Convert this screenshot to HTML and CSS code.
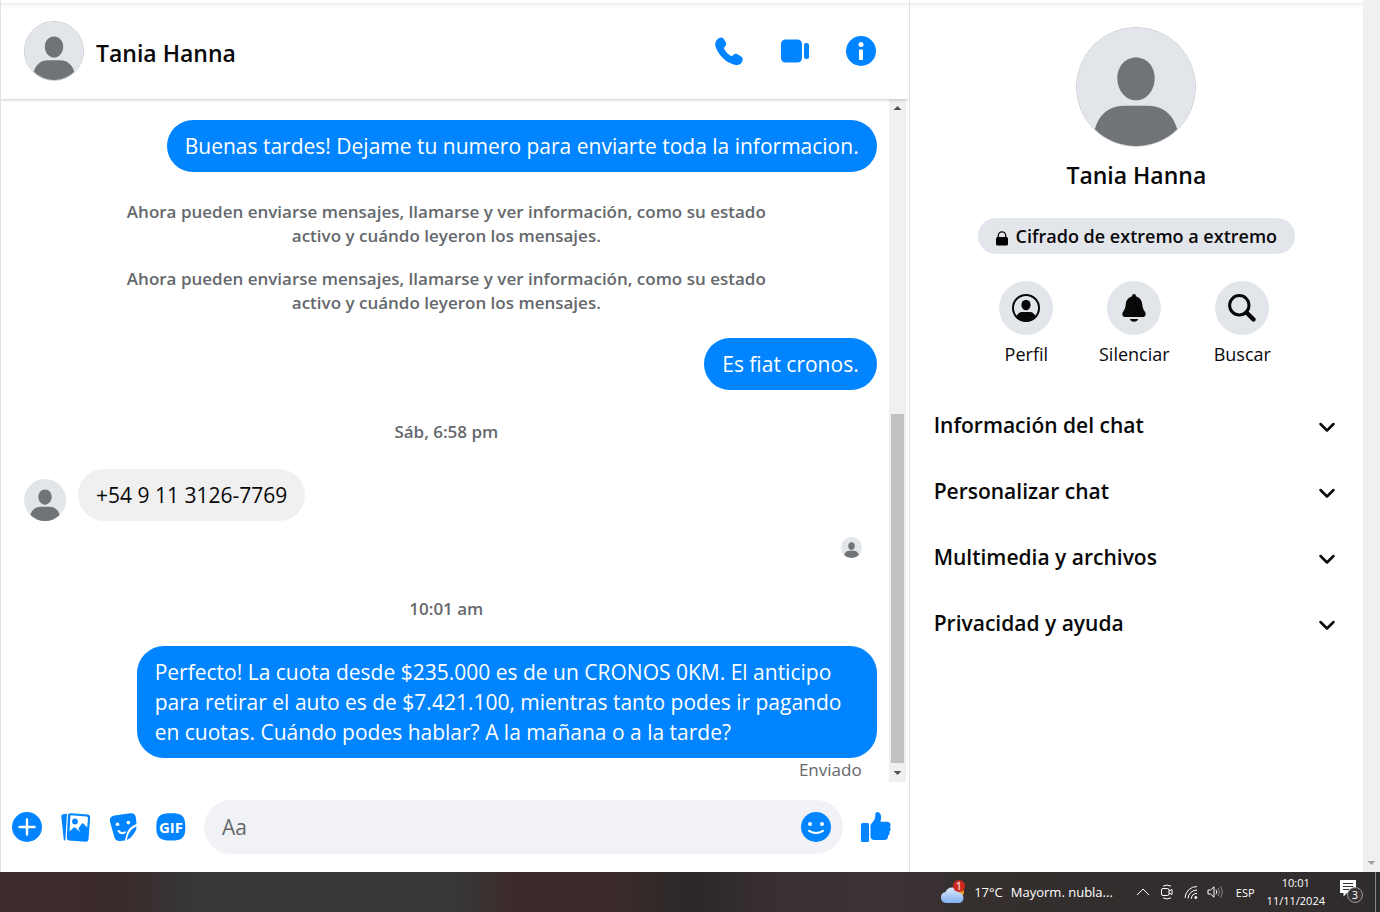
FILE: index.html
```
<!DOCTYPE html>
<html lang="es">
<head>
    <meta charset="UTF-8">
    <meta name="viewport" content="width=device-width, initial-scale=1.0">
    <title>Tania Hanna | Chat</title>
    <link rel="stylesheet" href="styles.css">
</head>
<body>
<svg class="sprite" aria-hidden="true">
    <symbol id="person" viewBox="0 0 60 60">
        <rect width="60" height="60" fill="#e2e5ea"/>
        <path d="M30 15c5.500 0 9.500 4.500 9.500 10.500 0 6.500-4.500 11.300-9.500 11.300s-9.500-4.800-9.500-11.300c0-6 4-10.500 9.500-10.500z" fill="#707377"/>
        <path d="M8 60c0-13 6-20.500 16-20.500h12c10 0 16 7.500 16 20.500z" fill="#707377"/>
    </symbol>
    <symbol id="chevron" viewBox="0 0 20 20">
        <path d="M3.500 7l6.500 6.500L16.500 7" fill="none" stroke="#080809" stroke-width="2.500" stroke-linecap="round" stroke-linejoin="round"/>
    </symbol>
</svg>

<div class="window">
    <main class="chat">
        <header class="chat-header">
            <svg class="avatar avatar-md"><use href="#person"/></svg>
            <h1>Tania Hanna</h1>
            <div class="actions">
                <button aria-label="Llamar">
                    <svg class="icon" viewBox="0 0 30 30"><path d="M3.200 3.600C4.800 1.600 8 .8 9.500 2.600l2.200 3.500c1 1.800.6 3.400-.9 4.700-.9.800-1 1.500-.5 2.400 1.500 2.700 3.700 4.900 6.400 6.500.9.500 1.600.4 2.300-.4 1.400-1.700 3.100-2 4.900-.9l3.500 2.300c2 1.400 1.700 4.200-.1 6.200-1.900 2.200-5.200 2.700-8.600 1.400C11.400 25.500 5.200 19.500 2 12 .6 8.700 1.100 5.900 3.200 3.600z"/></svg>
                </button>
                <button aria-label="Videollamada">
                    <svg class="icon" viewBox="0 0 30 30"><rect x="1" y="3.500" width="21" height="23" rx="4.500"/><rect x="24" y="7" width="5" height="16" rx="2"/></svg>
                </button>
                <button aria-label="Información">
                    <svg class="icon" viewBox="0 0 30 30"><circle cx="15" cy="15" r="15"/><circle cx="15" cy="8.500" r="2.500" fill="#fff"/><rect x="13" y="13.500" width="4" height="10.500" rx="1" fill="#fff"/></svg>
                </button>
            </div>
        </header>

        <div class="conversation">
            <div class="messages">
                <p class="bubble sent">Buenas tardes! Dejame tu numero para enviarte toda la informacion.</p>
                <p class="notice">Ahora pueden enviarse mensajes, llamarse y ver información, como su estado activo y cuándo leyeron los mensajes.</p>
                <p class="notice">Ahora pueden enviarse mensajes, llamarse y ver información, como su estado activo y cuándo leyeron los mensajes.</p>
                <p class="bubble sent">Es fiat cronos.</p>
                <p class="date">Sáb, 6:58 pm</p>
                <div class="received-row">
                    <svg class="avatar avatar-sm"><use href="#person"/></svg>
                    <p class="bubble received">+54 9 11 3126-7769</p>
                </div>
                <svg class="avatar avatar-xs"><use href="#person"/></svg>
                <p class="date">10:01 am</p>
                <p class="bubble sent">Perfecto! La cuota desde $235.000 es de un CRONOS 0KM. El anticipo para retirar el auto es de $7.421.100, mientras tanto podes ir pagando en cuotas. Cuándo podes hablar? A la mañana o a la tarde?</p>
                <p class="status">Enviado</p>
            </div>
            <div class="scrollbar">
                <svg class="arrow" viewBox="0 0 17 17"><path d="M4.500 11h8l-4-4z"/></svg>
                <div class="track"><div class="thumb"></div></div>
                <svg class="arrow" viewBox="0 0 17 17"><path d="M4.500 6h8l-4 4z"/></svg>
            </div>
        </div>

        <form class="composer">
            <button type="button" aria-label="Más acciones">
                <svg class="icon" viewBox="0 0 30 30"><circle cx="15" cy="15" r="15"/><path d="M15 7.500v15M7.500 15h15" stroke="#fff" stroke-width="2.400" stroke-linecap="round"/></svg>
            </button>
            <button type="button" aria-label="Adjuntar foto">
                <svg class="icon" viewBox="0 0 30 30">
                    <path d="M1.300 4.500Q1 2.600 3 2.300L7 1.800 5.300 28.500Q4 28.700 3.700 27z"/>
                    <path d="M10.500 1.300l17.300 1.300q2.500.3 2.300 2.800l-1.600 22q-.3 2.500-2.800 2.300L9 28.500q-2.400-.3-2.200-2.700L8 3.500q.2-2.300 2.500-2.200z"/>
                    <path d="M10.600 3.300l15.900 1.200q1.600.2 1.500 1.800l-.8 9.200-3.500-3.700q-1.200-1-2.200.2l-3.200 4.700 2.300 3.300-3.700-2.700-1.400-1.600q-1-1-2 0l-4 3.900.8-14.600q.1-1.700.3-1.700z" fill="#fff"/>
                    <circle cx="15" cy="9.500" r="2.900"/>
                </svg>
            </button>
            <button type="button" aria-label="Elegir sticker">
                <svg class="icon" viewBox="0 0 30 30">
                    <path d="M6.500 3.500l16-2.300q4.500-.4 5.400 4.300l.6 6.500q-6 2-9 7.500-1.500 3.500-2.500 9l-5 .4q-4.300.4-5.700-4L2 9.500Q1 4.500 6.500 3.500z"/>
                    <path d="M28.600 14.200q.2 3.800-2.600 7.300-3 4.800-7.200 6.600.8-5.600 3.200-8.600 2.300-3.200 6.600-5.300z"/>
                    <circle cx="9.500" cy="12.300" r="1.800" fill="#fff"/><circle cx="20.300" cy="10.600" r="1.800" fill="#fff"/>
                    <path d="M10.500 19q3 3.700 6.500 1.200" fill="none" stroke="#fff" stroke-width="2" stroke-linecap="round"/>
                </svg>
            </button>
            <button type="button" aria-label="Elegir GIF">
                <svg class="icon" viewBox="0 0 30 30"><path d="M15 1.300c10.500 0 14.300 2.200 14.300 13.700S25.500 28.500 15 28.500.3 26.500.3 15 4.500 1.300 15 1.300z"/><text x="15" y="21" text-anchor="middle" class="gif-text">GIF</text></svg>
            </button>
            <label class="field">
                <input type="text" placeholder="Aa" aria-label="Mensaje">
                <svg class="icon" viewBox="0 0 30 30"><circle cx="15" cy="15" r="15"/><circle cx="9" cy="12" r="2" fill="#fff"/><circle cx="21" cy="12" r="2" fill="#fff"/><path d="M8 18.800q7 4.600 14 0" fill="none" stroke="#fff" stroke-width="2" stroke-linecap="round"/></svg>
            </label>
            <button type="button" aria-label="Me gusta">
                <svg class="icon" viewBox="0 0 30 30">
                    <rect y="11" width="8" height="19" rx="1.500"/>
                    <path d="M9.500 14q0-1.500 1-2.500 3.500-3 3.800-7V2q.3-2 2.200-2 3.500.3 3.600 5.500 0 2-.8 4.200h6.500q3.600.3 3.700 3 0 1.300-.6 2.200 1 1.200.7 2.500-.2 1.300-1.200 2 .5 1.300 0 2.500-.4 1-1.300 1.500.2 4.600-4.300 4.600H13.500q-4 0-4-3.700z"/>
                </svg>
            </button>
        </form>
    </main>

    <aside class="details">
        <svg class="avatar avatar-lg"><use href="#person"/></svg>
        <h2>Tania Hanna</h2>
        <button class="encrypted">
            <svg class="lock" viewBox="0 0 12 15"><rect y="6" width="12" height="8.500" rx="1.500"/><path d="M2.300 7V4.500a3.700 3.700 0 0 1 7.400 0V7" fill="none" stroke="#080809" stroke-width="1.300"/></svg>
            Cifrado de extremo a extremo
        </button>
        <div class="shortcuts">
            <button class="shortcut">
                <span class="circle"><svg viewBox="0 0 28 28"><circle cx="14" cy="14" r="13" fill="none" stroke="#080809" stroke-width="2"/><ellipse cx="14" cy="11" rx="4.600" ry="5.200"/><path d="M4 23.500q2-5.500 6-5.500h8q4 0 6 5.500-4 4-10 4t-10-4z"/></svg></span>
                Perfil
            </button>
            <button class="shortcut">
                <span class="circle"><svg viewBox="0 0 28 28"><path d="M14 0q1.900 0 2.200 2.400c4 1.200 5.600 4 6 7.600.3 3.500 1 5.300 2.700 7.700 1.500 2.200.8 5.300-2.300 5.300H5.400c-3.100 0-3.800-3.100-2.300-5.300C4.800 15.300 5.500 13.500 5.800 10c.4-3.600 2-6.400 6-7.600Q12.100 0 14 0z"/><path d="M9.800 25h8.400q-1 2.800-4.200 2.800T9.800 25z"/></svg></span>
                Silenciar
            </button>
            <button class="shortcut">
                <span class="circle"><svg viewBox="0 0 28 28"><circle cx="11.300" cy="11.300" r="9.700" fill="none" stroke="#080809" stroke-width="3"/><path d="M18.500 18.500l7 7" stroke="#080809" stroke-width="4.400" stroke-linecap="round"/></svg></span>
                Buscar
            </button>
        </div>
        <div class="sections">
            <button>Información del chat <svg><use href="#chevron"/></svg></button>
            <button>Personalizar chat <svg><use href="#chevron"/></svg></button>
            <button>Multimedia y archivos <svg><use href="#chevron"/></svg></button>
            <button>Privacidad y ayuda <svg><use href="#chevron"/></svg></button>
        </div>
    </aside>

    <div class="page-scroll">
        <svg class="arrow" viewBox="0 0 17 17"><path d="M4.500 6h8l-4 4z"/></svg>
    </div>
</div>

<footer class="taskbar">
    <div class="weather">
        <svg class="weather-icon" viewBox="0 0 26 26">
            <defs><linearGradient id="cloud" x1="0" y1="0" x2="0" y2="1"><stop offset="0" stop-color="#dbe9fc"/><stop offset="1" stop-color="#82b1f0"/></linearGradient></defs>
            <circle cx="18" cy="13" r="6" fill="#f0961e"/>
            <path d="M6 24a5.500 5.500 0 0 1-.5-10.900A7.200 7.200 0 0 1 19 13.500 5.400 5.400 0 0 1 19.500 24z" fill="url(#cloud)"/>
            <circle cx="19" cy="7" r="6" fill="#cf2a20"/>
            <text x="19" y="11" text-anchor="middle" class="count">1</text>
        </svg>
        <span>17°C</span>
        <span>Mayorm. nubla...</span>
    </div>
    <div class="tray">
        <svg viewBox="0 0 16 16"><path d="M2 11l6-6 6 6"/></svg>
        <svg viewBox="0 0 16 16"><rect x="2.500" y="4.500" width="7.500" height="7" rx="1.500"/><path d="M10 7l3-1.500v5L10 9M4 2.200q4-2.400 8 0M4 13.800q4 2.400 8 0"/></svg>
        <svg viewBox="0 0 16 16"><path d="M2 14A12 12 0 0 1 14 2.500M5 14.500a9 9 0 0 1 9-8.500M8.300 14.800A6 6 0 0 1 14 9.300"/><circle cx="12.800" cy="13.500" r="1" fill="#fff"/></svg>
        <svg viewBox="0 0 16 16"><path d="M1 6h2.500L7 2.800v10.400L3.500 10H1z"/><path d="M9 5.800q1.600 2.200 0 4.400"/><path d="M11 4q3 4 0 8M13.300 2.500q4 5.500 0 11" opacity=".45"/></svg>
    </div>
    <span class="lang">ESP</span>
    <div class="clock"><span>10:01</span><span>11/11/2024</span></div>
    <svg class="notifications" viewBox="0 0 26 26">
        <path d="M1 1h16v13H8l-3.500 3.500V14H1z" fill="#fff"/>
        <path d="M4 4.500h10M4 7.500h10M4 10.500h6" stroke="#34302f" stroke-width="1.200"/>
        <circle cx="16" cy="16" r="7.500" fill="#3a3635" stroke="#999" stroke-width="1"/>
        <text x="16" y="20" text-anchor="middle" class="count">3</text>
    </svg>
    <div class="show-desktop"></div>
</footer>
</body>
</html>
```
FILE: styles.css
```
* {
    box-sizing: border-box;
}

body {
    font-family: "Segoe UI", "Open Sans", "Noto Sans", sans-serif;
    margin: 0;
    min-height: 100vh;
    display: flex;
    flex-direction: column;
    color: #080809;
    background: #fff;
}

h1, h2, p {
    margin: 0;
}

h1, h2 {
    font-size: 23px;
    line-height: 30px;
    font-weight: 600;
}

button {
    font: inherit;
    color: inherit;
    background: none;
    border: none;
    padding: 0;
    cursor: pointer;
}

svg {
    display: block;
    flex: none;
}

.sprite {
    position: absolute;
    width: 0;
    height: 0;
}

.icon {
    width: 30px;
    height: 30px;
    fill: #0084ff;
}

.window {
    flex: 1;
    display: grid;
    grid-template-columns: 2fr 1fr 17px;
    background: linear-gradient(#fff 3px, #ededed 3px, #f8f8f8 5px, #fff 10px);
}

/* Avatares */
.avatar {
    border-radius: 50%;
}

.avatar-lg {
    width: 120px;
    height: 120px;
    border: 1px solid #cbcdd1;
}

.avatar-md {
    width: 60px;
    height: 60px;
    border: 1px solid #cbcdd1;
}

.avatar-sm {
    width: 42px;
    height: 42px;
}

.avatar-xs {
    width: 21px;
    height: 21px;
    margin: 16px 15px 39px 0;
    align-self: flex-end;
}

/* Chat */
.chat {
    display: flex;
    flex-direction: column;
    min-width: 0;
    border-left: 1px solid #e3e3e3;
}

.chat-header {
    display: flex;
    align-items: center;
    gap: 12px;
    height: 99px;
    padding: 3px 33px 0 23px;
    box-shadow: 0 1px 3px rgba(0, 0, 0, 0.2);
    clip-path: inset(0 0 -6px 0);
}

.chat-header h1 {
    padding-top: 4px;
}

.actions {
    display: flex;
    gap: 36px;
    margin-left: auto;
}

.conversation {
    flex: 1;
    display: flex;
    padding-right: 3px;
}

.messages {
    flex: 1;
    display: flex;
    flex-direction: column;
    padding: 21px 12px 0 23px;
}

.bubble {
    max-width: 740px;
    padding: 11px 18px;
    border-radius: 27px;
    font-size: 21px;
    line-height: 30px;
}

.sent {
    align-self: flex-end;
    background: #0084ff;
    color: #fff;
}

.received {
    background: #f0f0f0;
}

.notice,
.date {
    text-align: center;
    color: #65686c;
    font-size: 17px;
    line-height: 24px;
    font-weight: 600;
    margin-right: 8px;
}

.notice {
    padding: 0 90px;
    margin-bottom: 19px;
}

.bubble + .notice {
    margin-top: 28px;
}

.notice + .bubble {
    margin-top: 4px;
}

.date {
    margin-bottom: 25px;
}

.bubble + .date {
    margin-top: 30px;
}

.received-row {
    display: flex;
    align-items: flex-end;
    gap: 12px;
}

.status {
    align-self: flex-end;
    margin-right: 15px;
    color: #65686c;
    font-size: 17px;
    line-height: 24px;
}

.scrollbar {
    width: 17px;
    display: flex;
    flex-direction: column;
    background: #f0f0f0;
}

.arrow {
    width: 17px;
    height: 17px;
    fill: #505050;
}

.track {
    flex: 1;
    display: flex;
    flex-direction: column;
    justify-content: flex-end;
    padding: 0 2px 2px;
}

.thumb {
    height: 54%;
    background: #c1c1c1;
}

.composer {
    display: flex;
    align-items: center;
    gap: 18px;
    padding: 18px 18px 18px 11px;
}

.gif-text {
    font-size: 15px;
    font-weight: 700;
    fill: #fff;
}

.field {
    flex: 1;
    display: flex;
    align-items: center;
    height: 54px;
    padding: 0 12px 0 18px;
    border-radius: 27px;
    background: #f0f2f5;
}

.field input {
    flex: 1;
    min-width: 0;
    padding: 0;
    border: none;
    outline: none;
    background: none;
    font: inherit;
    font-size: 21px;
}

.field input::placeholder {
    color: #65686c;
}

/* Panel derecho */
.details {
    display: flex;
    flex-direction: column;
    align-items: center;
    padding-top: 27px;
    border-left: 1px solid #e3e3e3;
}

.details h2 {
    margin: 13px 0 28px;
}

.encrypted {
    display: flex;
    align-items: center;
    gap: 8px;
    height: 36px;
    padding: 0 18px;
    border-radius: 18px;
    background: #e2e5ea;
    font-size: 18px;
    font-weight: 600;
}

.lock {
    width: 12px;
    height: 15px;
    margin-top: 4px;
}

.shortcuts {
    display: flex;
    margin: 27px 4px 0 0;
}

.shortcut {
    display: flex;
    flex-direction: column;
    align-items: center;
    gap: 7px;
    width: 108px;
    font-size: 18px;
    line-height: 24px;
}

.circle {
    display: grid;
    place-items: center;
    width: 54px;
    height: 54px;
    border-radius: 50%;
    background: #e2e5ea;
}

.circle svg {
    width: 28px;
    height: 28px;
    fill: #080809;
}

.sections {
    align-self: stretch;
    display: flex;
    flex-direction: column;
    margin-top: 26px;
    padding: 0 26px 0 24px;
}

.sections button {
    display: flex;
    align-items: center;
    justify-content: space-between;
    height: 66px;
    font-size: 21px;
    font-weight: 600;
}

.sections svg {
    width: 20px;
    height: 20px;
    margin-top: 4px;
}

.page-scroll {
    display: flex;
    align-items: flex-end;
    background: #f0f0f0;
}

.page-scroll .arrow {
    fill: #a3a3a3;
}

/* Barra de tareas */
.taskbar {
    display: flex;
    align-items: center;
    height: 40px;
    padding-right: 4px;
    color: #fff;
    font-size: 13px;
    background: linear-gradient(90deg, #3f2c2d, #3a2b2c 9%, #363737 14%, #363737 33%, #3d2b2b 37%, #3d2b2b 44%, #2b2828 50%, #3b3032 57%, #3c3135 65%, #352f2e 70%, #2f2d2c);
}

.weather {
    display: flex;
    align-items: center;
    gap: 8px;
    margin-left: auto;
}

.weather-icon {
    width: 26px;
    height: 26px;
}

.count {
    font-size: 11px;
    fill: #fff;
}

.tray {
    display: flex;
    gap: 8px;
    margin-left: 22px;
}

.tray svg {
    width: 16px;
    height: 16px;
    fill: none;
    stroke: #fff;
}

.lang {
    margin-left: 13px;
    font-size: 11px;
}

.clock {
    display: flex;
    flex-direction: column;
    align-items: center;
    margin: 0 14px 0 12px;
    font-size: 11px;
    line-height: 18px;
}

.notifications {
    width: 26px;
    height: 26px;
}

.show-desktop {
    align-self: stretch;
    margin-left: 10px;
    border-left: 1px solid #8a8887;
}
```
